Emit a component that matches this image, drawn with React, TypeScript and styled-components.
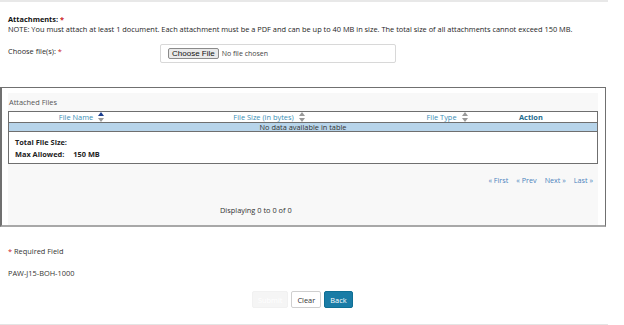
import styled, { createGlobalStyle } from 'styled-components';

const GlobalStyle = createGlobalStyle`
  body {
    margin: 0;
    background: #ffffff;
    font-family: "Open Sans", "Noto Sans", sans-serif;
    color: #333333;
  }
`;

const SortIcon = ({ active = false }: { active?: boolean }) => (
  <svg width="6" height="10" viewBox="0 0 6 10">
    <polygon points="3,0 6,4 0,4" fill={active ? '#1b3d8f' : '#9a9a9a'} />
    <polygon points="0,6 6,6 3,10" fill="#9a9a9a" />
  </svg>
);

const App = () => {
  return (
    <Page>
      <GlobalStyle />
      <Section>
        <Heading>
          Attachments: <Star>*</Star>
        </Heading>
        <Note>
          NOTE: You must attach at least 1 document. Each attachment must be a PDF and can be up to
          40 MB in size. The total size of all attachments cannot exceed 150 MB.
        </Note>
        <FileRow>
          <Label>
            Choose file(s): <Star>*</Star>
          </Label>
          <FileBox>
            <ChooseButton type="button">Choose File</ChooseButton>
            <NoFile>No file chosen</NoFile>
          </FileBox>
        </FileRow>
      </Section>

      <Panel>
        <PanelInner>
          <Caption>Attached Files</Caption>
          <TableBox>
            <HeadRow>
              <HeadCell $width={145}>
                File Name <SortIcon active />
              </HeadCell>
              <HeadCell $width={230}>
                File Size (in bytes) <SortIcon />
              </HeadCell>
              <HeadCell $width={126}>
                File Type <SortIcon />
              </HeadCell>
              <ActionCell>Action</ActionCell>
            </HeadRow>
            <EmptyRow>No data available in table</EmptyRow>
            <Totals>
              <TotalLine>Total File Size:</TotalLine>
              <TotalLine>
                Max Allowed:<Value>150 MB</Value>
              </TotalLine>
            </Totals>
          </TableBox>
          <Pager>
            <PageLink>« First</PageLink>
            <PageLink>« Prev</PageLink>
            <PageLink>Next »</PageLink>
            <PageLink>Last »</PageLink>
          </Pager>
          <Displaying>Displaying 0 to 0 of 0</Displaying>
        </PanelInner>
      </Panel>

      <Footer>
        <FootText>
          <Star>*</Star> Required Field
        </FootText>
        <FootText>PAW-J15-BOH-1000</FootText>
        <Buttons>
          <Button $kind="disabled" disabled>
            Submit
          </Button>
          <Button $kind="plain">Clear</Button>
          <Button $kind="primary">Back</Button>
        </Buttons>
      </Footer>
    </Page>
  );
};

const Page = styled.div`
  width: 608px;
  height: 322px;
  border-top: 2px solid #e8e8e8;
  border-bottom: 2px solid #e4e4e4;
  font-size: 7.4px;
`;

const Section = styled.div`
  padding: 12px 8px 0 8px;
`;

const Heading = styled.div`
  font-weight: 700;
  color: #111111;
  line-height: 10px;
`;

const Star = styled.span`
  color: #cc2222;
`;

const Note = styled.div`
  color: #1e1e1e;
  line-height: 10px;
  white-space: nowrap;
`;

const FileRow = styled.div`
  display: flex;
  margin-top: 10px;
`;

const Label = styled.div`
  width: 152px;
  line-height: 10px;
  padding-top: 2px;
  color: #2a2a2a;
`;

const FileBox = styled.div`
  width: 236px;
  height: 19px;
  box-sizing: border-box;
  border: 1px solid #d8d8d8;
  border-radius: 2px;
  display: flex;
  align-items: center;
  padding-left: 7px;
  gap: 3px;
`;

const ChooseButton = styled.button`
  font-family: "Liberation Sans", Arial, sans-serif;
  font-size: 8px;
  height: 11px;
  padding: 0 3px;
  line-height: 9px;
  border: 1px solid #8a8a8a;
  border-radius: 2px;
  background: #e9e9e9;
  color: #111111;
`;

const NoFile = styled.span`
  font-size: 7px;
  color: #444444;
`;

const Panel = styled.div`
  margin-top: 24px;
  width: 606px;
  height: 140px;
  box-sizing: border-box;
  border: 1px solid #707070;
  border-left-width: 2px;
  border-bottom: 2px solid #a8a8a8;
  padding: 5px 7px 0 6px;
`;

const PanelInner = styled.div`
  background: #f8f8f8;
  height: 100%;
  display: flex;
  flex-direction: column;
`;

const Caption = styled.div`
  line-height: 10px;
  padding: 4px 0 4px 1px;
  color: #555555;
`;

const TableBox = styled.div`
  background: #ffffff;
  border: 1px solid #6f6f6f;
  height: 53px;
  box-sizing: border-box;
`;

const HeadRow = styled.div`
  display: flex;
  height: 10px;
  border-bottom: 1px solid #6f6f6f;
`;

const HeadCell = styled.div<{ $width: number }>`
  width: ${(p) => p.$width}px;
  display: flex;
  align-items: center;
  justify-content: center;
  gap: 5px;
  color: #3c8fb6;
  line-height: 10px;
`;

const ActionCell = styled.div`
  flex: 1;
  padding-left: 9px;
  font-weight: 700;
  color: #1e6b8e;
  line-height: 10px;
`;

const EmptyRow = styled.div`
  background: #b7d4ea;
  border-bottom: 1px solid #6f6f6f;
  text-align: center;
  line-height: 8px;
  color: #333333;
`;

const Totals = styled.div`
  padding: 6px 0 0 6px;
  display: flex;
  flex-direction: column;
  gap: 3px;
`;

const TotalLine = styled.div`
  font-weight: 700;
  color: #222222;
  line-height: 9px;
`;

const Value = styled.span`
  margin-left: 9px;
`;

const Pager = styled.div`
  display: flex;
  justify-content: flex-end;
  gap: 8px;
  padding: 11px 5px 0 0;
  line-height: 10px;
  font-size: 7.2px;
`;

const PageLink = styled.span`
  color: #4a83bd;
`;

const Displaying = styled.div`
  padding: 20px 0 0 212px;
  line-height: 10px;
  color: #333333;
`;

const Footer = styled.div`
  padding: 19px 8px 0 8px;
  display: flex;
  flex-direction: column;
`;

const FootText = styled.div`
  line-height: 10px;
  margin-bottom: 12px;
  color: #333333;
`;

const Buttons = styled.div`
  display: flex;
  gap: 3px;
  padding-left: 244px;
  margin-top: 1px;
`;

const Button = styled.button<{ $kind: 'disabled' | 'plain' | 'primary' }>`
  font-family: "Open Sans", "Noto Sans", sans-serif;
  font-size: 7.4px;
  height: 17px;
  padding: 0 5px;
  border-radius: 2px;
  border: 1px solid
    ${(p) => (p.$kind === 'plain' ? '#cfcfcf' : p.$kind === 'primary' ? '#0f6f94' : '#f1f1f1')};
  background: ${(p) =>
    p.$kind === 'primary' ? '#1a7ca6' : p.$kind === 'disabled' ? '#f5f5f5' : '#ffffff'};
  color: ${(p) => (p.$kind === 'primary' ? '#ffffff' : p.$kind === 'disabled' ? '#ffffff' : '#333333')};
`;

export default App;
